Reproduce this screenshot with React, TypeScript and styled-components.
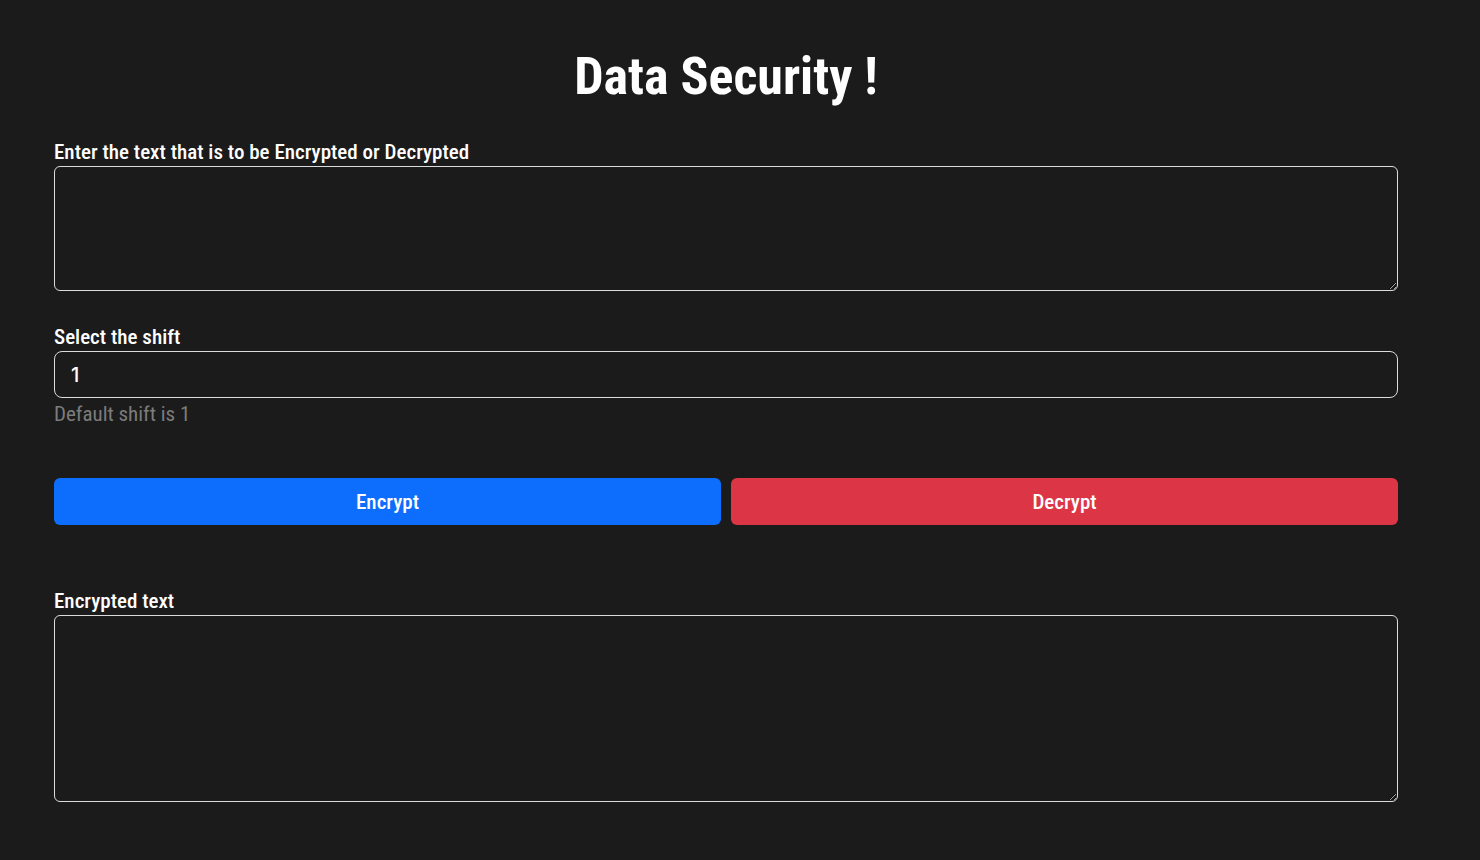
import styled, { createGlobalStyle } from 'styled-components';

const GlobalStyles = createGlobalStyle`
  html, body {
    margin: 0;
    padding: 0;
    background: #1b1b1b;
  }
  body {
    font-family: 'Roboto Condensed', Roboto, sans-serif;
    font-stretch: condensed;
    color: #ffffff;
  }
  * {
    box-sizing: border-box;
  }
`;

const Page = styled.div`
  min-height: 860px;
  background: #1b1b1b;
  padding: 42px 82px 0 54px;
`;

const Title = styled.h1`
  margin: 0 0 28px;
  text-align: center;
  font-size: 52px;
  font-weight: 700;
  line-height: 70px;
`;

const Field = styled.div<{ $gap?: number }>`
  display: flex;
  flex-direction: column;
  margin-bottom: ${({ $gap }) => $gap ?? 0}px;
`;

const Label = styled.label`
  font-size: 21px;
  font-weight: 500;
  line-height: 24px;
  margin-bottom: 2px;
`;

const TextArea = styled.textarea<{ $height: number }>`
  width: 100%;
  height: ${({ $height }) => $height}px;
  background: transparent;
  border: 1px solid #dcdcdc;
  border-radius: 6px;
  color: #fff;
  font-family: Inter, 'Noto Sans', sans-serif;
  font-size: 16px;
  padding: 8px 14px;
  resize: vertical;
  outline: none;
`;

const NumberInput = styled.input`
  width: 100%;
  height: 47px;
  background: transparent;
  border: 1px solid #dcdcdc;
  border-radius: 8px;
  color: #fff;
  font-family: Inter, 'Noto Sans', sans-serif;
  font-size: 20px;
  font-weight: 500;
  padding: 0 16px;
  outline: none;
`;

const Hint = styled.div`
  font-size: 21px;
  line-height: 24px;
  color: #7c7c7c;
  margin-top: 4px;
`;

const ButtonRow = styled.div`
  display: grid;
  grid-template-columns: 1fr 1fr;
  gap: 10px;
  margin: 52px 0 64px;
`;

const ActionButton = styled.button<{ $variant: 'primary' | 'danger' }>`
  height: 47px;
  border: none;
  border-radius: 6px;
  background: ${({ $variant }) => ($variant === 'primary' ? '#0d6efd' : '#dc3545')};
  color: #fff;
  font-family: inherit;
  font-stretch: inherit;
  font-size: 21px;
  font-weight: 500;
  cursor: pointer;
`;

export default function App() {
  return (
    <>
      <GlobalStyles />
      <Page>
        <Title>Data Security !</Title>
        <Field $gap={34}>
          <Label>Enter the text that is to be Encrypted or Decrypted</Label>
          <TextArea $height={125} />
        </Field>
        <Field>
          <Label>Select the shift</Label>
          <NumberInput type="text" defaultValue="1" />
          <Hint>Default shift is 1</Hint>
        </Field>
        <ButtonRow>
          <ActionButton $variant="primary">Encrypt</ActionButton>
          <ActionButton $variant="danger">Decrypt</ActionButton>
        </ButtonRow>
        <Field>
          <Label>Encrypted text</Label>
          <TextArea $height={187} readOnly />
        </Field>
      </Page>
    </>
  );
}
